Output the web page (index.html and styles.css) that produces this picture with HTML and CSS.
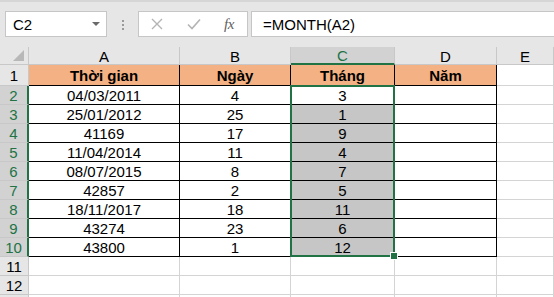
FILE: index.html
```html
<!DOCTYPE html>
<html lang="vi">
<head>
    <meta charset="UTF-8">
    <meta name="viewport" content="width=device-width, initial-scale=1.0">
    <title>MONTH</title>
    <link rel="stylesheet" href="styles.css">
</head>
<body>
    <div class="formula-bar">
        <div class="name-box">
            <span>C2</span>
            <span class="caret"></span>
        </div>
        <div class="grip"><i></i><i></i><i></i></div>
        <div class="fx-buttons">
            <svg class="btn-icon" width="12" height="12" viewBox="0 0 12 12"><path d="M1 1L11 11M11 1L1 11" stroke="#b4b4b4" stroke-width="1.4" fill="none"/></svg>
            <svg class="btn-icon" width="14" height="12" viewBox="0 0 14 12"><path d="M1 6.5L5 10.5L13 1.5" stroke="#b4b4b4" stroke-width="1.6" fill="none"/></svg>
            <span class="fx">fx</span>
        </div>
        <div class="formula-input">=MONTH(A2)</div>
    </div>

    <div id="sheet" class="sheet">
        <div class="corner"><span></span></div>
        <!-- headers and cells are filled in below -->
    </div>

    <script>
        const columns = ['A', 'B', 'C', 'D', 'E'];
        const header = ['Thời gian', 'Ngày', 'Tháng', 'Năm'];
        const rows = [
            ['04/03/2011', 4, 3],
            ['25/01/2012', 25, 1],
            ['41169', 17, 9],
            ['11/04/2014', 11, 4],
            ['08/07/2015', 8, 7],
            ['42857', 2, 5],
            ['18/11/2017', 18, 11],
            ['43274', 23, 6],
            ['43800', 1, 12]
        ];

        const sheet = document.getElementById('sheet');
        let html = '';

        columns.forEach(col => {
            html += `<div class="col-head${col === 'C' ? ' active' : ''}">${col}</div>`;
        });

        // row 1: table header
        html += '<div class="row-head">1</div>';
        header.forEach(text => {
            html += `<div class="cell table head">${text}</div>`;
        });
        html += '<div class="cell"></div>';

        rows.forEach((row, i) => {
            html += `<div class="row-head active">${i + 2}</div>`;
            html += `<div class="cell table">${row[0]}</div>`;
            html += `<div class="cell table">${row[1]}</div>`;
            html += `<div class="cell table${i > 0 ? ' picked' : ''}">${row[2]}</div>`;
            html += '<div class="cell table"></div>';
            html += '<div class="cell"></div>';
        });

        // empty rows below the table; the last one only peeks in at the bottom
        ['11', '12', ''].forEach(n => {
            html += `<div class="row-head">${n}</div>`;
            columns.forEach(() => { html += '<div class="cell"></div>'; });
        });

        html += '<div class="selection"><span class="handle"></span></div>';
        sheet.innerHTML += html;
    </script>
</body>
</html>
```

FILE: styles.css
```css
body {
    margin: 0;
    font-family: "Liberation Sans", Arial, sans-serif;
    font-size: 15px;
    color: #000;
    background-color: #fff;
    overflow: hidden;
}
.formula-bar {
    height: 47px;
    box-sizing: border-box;
    background-color: #e6e6e6;
    border-top: 2px solid #d6d6d6;
    display: flex;
    align-items: flex-start;
    padding: 9px 0 0 5px;
}
.name-box {
    width: 102px;
    height: 26px;
    box-sizing: border-box;
    background-color: #fff;
    border: 1px solid #c6c6c6;
    display: flex;
    align-items: center;
    justify-content: space-between;
    padding: 0 6px 0 7px;
}
.caret {
    width: 0;
    height: 0;
    border-left: 4px solid transparent;
    border-right: 4px solid transparent;
    border-top: 4px solid #6a6a6a;
}
.grip {
    width: 31px;
    display: flex;
    flex-direction: column;
    align-items: center;
    gap: 2px;
    padding-top: 9px;
}
.grip i {
    width: 2px;
    height: 2px;
    background-color: #9a9a9a;
}
.fx-buttons {
    width: 110px;
    height: 26px;
    box-sizing: border-box;
    background-color: #fff;
    border: 1px solid #c6c6c6;
    display: flex;
    align-items: center;
    padding: 0 0 0 12px;
}
.btn-icon {
    margin-right: 24px;
}
.btn-icon + .btn-icon {
    margin-right: 23px;
}
.fx {
    font-family: "Liberation Serif", serif;
    font-style: italic;
    font-size: 15px;
    color: #5f5f5f;
    letter-spacing: -0.5px;
}
.formula-input {
    flex: 1;
    height: 26px;
    box-sizing: border-box;
    margin-left: 3px;
    background-color: #fff;
    border: 1px solid #c6c6c6;
    border-right: none;
    padding: 4px 0 0 11px;
}
.sheet {
    position: relative;
    display: grid;
    grid-template-columns: 29px 151px 111px 104px 102px 1fr;
    grid-template-rows: 18px 21px repeat(9, 19px) 19px 19px 19px;
}
.corner, .col-head, .row-head {
    background-color: #e6e6e6;
    border-right: 1px solid #c8c8c8;
    border-bottom: 1px solid #c8c8c8;
    box-sizing: border-box;
}
.corner {
    position: relative;
}
.corner span {
    position: absolute;
    right: 4px;
    bottom: 3px;
    width: 0;
    height: 0;
    border-left: 11px solid transparent;
    border-bottom: 11px solid #b8b8b8;
}
.col-head {
    display: flex;
    align-items: center;
    justify-content: center;
    line-height: 1;
    padding-top: 1px;
}
.col-head.active {
    background-color: #d2d2d2;
    color: #217346;
    border-bottom: 2px solid #217346;
}
.row-head {
    display: flex;
    align-items: center;
    justify-content: center;
    line-height: 1;
}
.row-head.active {
    background-color: #d2d2d2;
    color: #217346;
    border-right: 2px solid #217346;
}
.cell {
    box-sizing: border-box;
    border-right: 1px solid #d4d4d4;
    border-bottom: 1px solid #d4d4d4;
    display: flex;
    align-items: center;
    justify-content: center;
    line-height: 1;
    padding-top: 1px;
}
.cell.table {
    border-right-color: #000;
    border-bottom-color: #000;
}
.cell.head {
    background-color: #f4b183;
    font-weight: bold;
}
.cell.picked {
    background-color: #c6c6c6;
}
.selection {
    position: absolute;
    grid-row: 3 / 12;
    grid-column: 4 / 5;
    top: -1px;
    left: -1px;
    right: 0;
    bottom: 0;
    border: 2px solid #217346;
    pointer-events: none;
}
.handle {
    position: absolute;
    right: -5px;
    bottom: -5px;
    width: 6px;
    height: 6px;
    background-color: #217346;
    border: 1px solid #fff;
}
```
